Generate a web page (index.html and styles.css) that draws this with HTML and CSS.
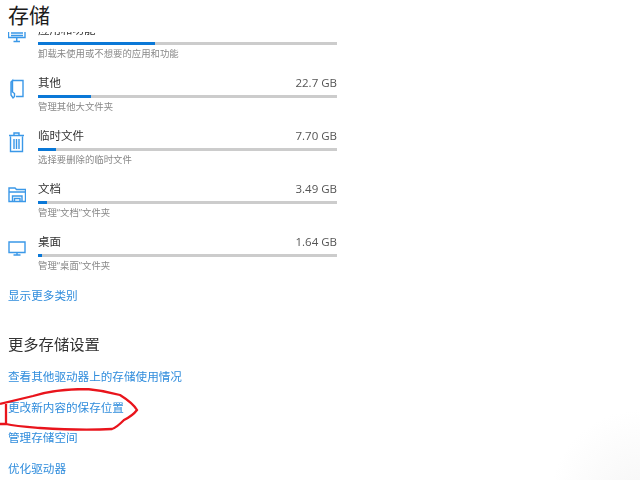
FILE: index.html
```html
<!DOCTYPE html>
<html lang="zh-CN">
<head>
  <meta charset="UTF-8">
  <title>存储</title>
  <link rel="stylesheet" href="styles.css">
</head>
<body>
  <div class="page">
    <h1 class="title">存储</h1>

    <div class="rows">
      <div class="row">
        <svg class="icon" viewBox="0 0 18 22"><path d="M0.500 1V12.500H17V1M8.750 12.500V16M5.500 16.500H12M3 8H15M3 10.500H15"/></svg>
        <div class="info">
          <div class="head"><span>应用和功能</span><span class="size"></span></div>
          <div class="bar"><div class="fill" style="width: 39.200%"></div></div>
          <div class="desc">卸载未使用或不想要的应用和功能</div>
        </div>
      </div>
      <div class="row">
        <svg class="icon" viewBox="0 0 18 22"><path d="M4.500 2.500H15V18.500H8M4.500 2.500L3 4V17L5 20L6.500 18.500V15.500L4.500 14V2.500Z"/></svg>
        <div class="info">
          <div class="head"><span>其他</span><span class="size">22.7 GB</span></div>
          <div class="bar"><div class="fill" style="width: 17.700%"></div></div>
          <div class="desc">管理其他大文件夹</div>
        </div>
      </div>
      <div class="row">
        <svg class="icon" viewBox="0 0 18 22"><path d="M2.500 5.500V20.500H14.500V5.500M1 4.500H16M6 4.500V2H11V4.500M6 8V18M8.500 8V18M11 8V18"/></svg>
        <div class="info">
          <div class="head"><span>临时文件</span><span class="size">7.70 GB</span></div>
          <div class="bar"><div class="fill" style="width: 6%"></div></div>
          <div class="desc">选择要删除的临时文件</div>
        </div>
      </div>
      <div class="row">
        <svg class="icon" viewBox="0 0 18 22"><path d="M1 4H7L8.500 5.500H17.500V17.500H1ZM1 8H17.500M4.500 17.500V12H14V17.500M6.500 17.500V14.500H12V17.500"/></svg>
        <div class="info">
          <div class="head"><span>文档</span><span class="size">3.49 GB</span></div>
          <div class="bar"><div class="fill" style="width: 3%"></div></div>
          <div class="desc">管理“文档”文件夹</div>
        </div>
      </div>
      <div class="row">
        <svg class="icon" viewBox="0 0 18 22"><path d="M1 5H17V15.500H1ZM9 15.500V18M5.500 18H12.500"/></svg>
        <div class="info">
          <div class="head"><span>桌面</span><span class="size">1.64 GB</span></div>
          <div class="bar"><div class="fill" style="width: 1.300%"></div></div>
          <div class="desc">管理“桌面”文件夹</div>
        </div>
      </div>
    </div>

    <a class="link more">显示更多类别</a>

    <h2 class="subtitle">更多存储设置</h2>

    <div class="links">
      <a class="link">查看其他驱动器上的存储使用情况</a>
      <a class="link">更改新内容的保存位置</a>
      <a class="link">管理存储空间</a>
      <a class="link">优化驱动器</a>
    </div>
  </div>

  <svg class="scribble" viewBox="0 0 140 46"><path d="M0 16L33 8C45 4 60 1 87 1C100 2 113 5 120 7C128 12 134 17 137 22C134 26 128 30 124 32C120 36 116 40 112 41C95 42 70 42 40 40C28 39 15 38 6 36V16M6 36H0"/></svg>
</body>
</html>
```

FILE: styles.css
```css
* {
  box-sizing: border-box;
}

html, body {
  height: 100%;
}

body {
  margin: 0;
  overflow: hidden;
  background: radial-gradient(circle at 640px 500px, #f6f6f6 0, #ffffff 90px);
  font-family: "Open Sans", "Noto Sans CJK SC", sans-serif;
  color: #333;
}

.page {
  height: 480px;
  overflow: hidden;
  padding-left: 8px;
  filter: blur(0.45px);
}

.title {
  position: relative;
  z-index: 1;
  height: 32px;
  margin: 0 0 0 -8px;
  padding-left: 8px;
  background: #fff;
  font-size: 21px;
  line-height: 31px;
  font-weight: 400;
  color: #1c1c1c;
}

.rows {
  width: 329px;
  margin-top: -13px;
}

.row {
  display: flex;
  height: 53px;
  padding-top: 3px;
}

.icon {
  flex: none;
  width: 18px;
  height: 22px;
  margin: 3px 12px 0 0;
  fill: none;
  stroke: #3a98e8;
  stroke-width: 1.400;
}

.info {
  flex: 1;
}

.head {
  display: flex;
  justify-content: space-between;
  height: 16px;
  font-size: 11.500px;
  line-height: 16px;
}

.size {
  font-size: 11.500px;
  color: #555;
}

.bar {
  height: 3px;
  margin-top: 4px;
  background: #cccccc;
}

.fill {
  height: 100%;
  background: #0a78d7;
}

.desc {
  margin-top: 2px;
  font-size: 9.400px;
  line-height: 14px;
  color: #888;
}

.link {
  display: block;
  font-size: 11.600px;
  line-height: 16px;
  color: #2f8cdc;
}

.more {
  margin-top: 4px;
}

.subtitle {
  margin: 29px 0 0;
  font-size: 15.300px;
  line-height: 22px;
  font-weight: 400;
  color: #333;
}

.links {
  display: flex;
  flex-direction: column;
  gap: 14.700px;
  margin-top: 14px;
}

.scribble {
  position: absolute;
  left: 0;
  top: 388px;
  width: 140px;
  height: 46px;
  fill: none;
  stroke: #e9141c;
  stroke-width: 2.300;
}
```
